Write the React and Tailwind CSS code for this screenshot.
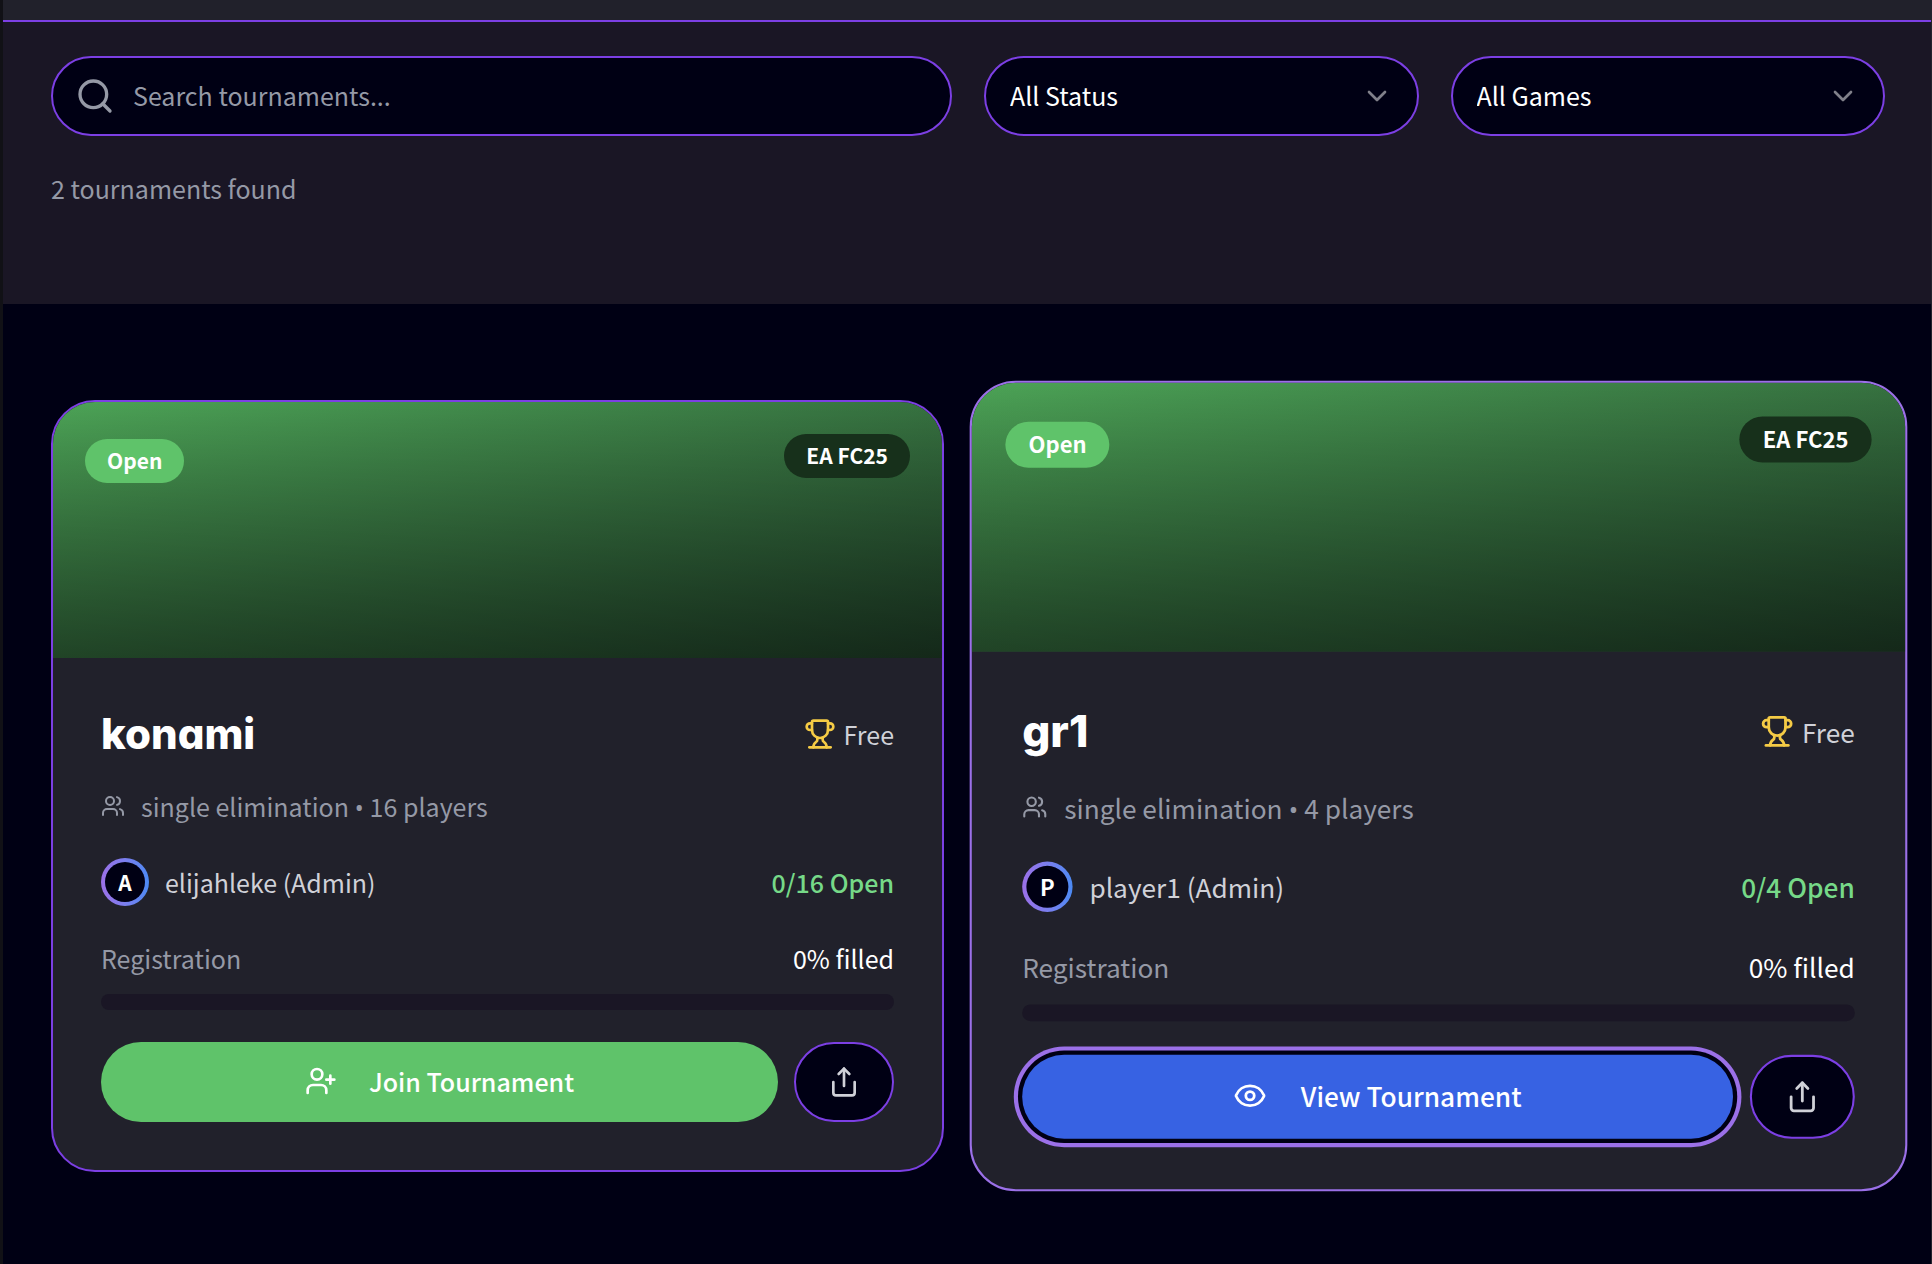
import React from 'react';
import { ChevronDown, Eye, Search, Share, Trophy, UserPlus, Users } from 'lucide-react';

const tournaments = [
    { id: 1, name: 'konami', game: 'EA FC25', format: 'single elimination', size: 16, joined: 0, host: 'elijahleke', initial: 'A', action: 'join' },
    { id: 2, name: 'gr1', game: 'EA FC25', format: 'single elimination', size: 4, joined: 0, host: 'player1', initial: 'P', action: 'view', active: true },
];

const FilterSelect = ({ label, options }) => (
    <div className="relative">
        <select aria-label={label} className="h-20 w-full appearance-none rounded-full border-2 border-[#7c3fe4] bg-[#000014] pl-6 pr-16 text-[25px] text-white">
            {options.map(o => <option key={o}>{o}</option>)}
        </select>
        <ChevronDown size={32} className="pointer-events-none absolute right-[26px] top-6 text-white/50" />
    </div>
);

const ActionButton = ({ action }) => action === 'join' ? (
    <button className="flex h-20 flex-1 items-center justify-center gap-8 rounded-full bg-[#5fc36a] pb-0.5 font-medium">
        <UserPlus size={32} />Join Tournament
    </button>
) : (
    <button className="flex h-20 flex-1 items-center justify-center gap-8 rounded-full bg-[#3762e3] pb-0.5 font-medium ring-4 ring-[#9b70e8] ring-offset-4 ring-offset-[#000014]">
        <Eye size={32} />View Tournament
    </button>
);

const TournamentCard = ({ t }) => {
    const filled = Math.round((t.joined / t.size) * 100);
    return (
        <article className={`overflow-hidden rounded-[44px] border-2 bg-[#21212b] text-white ${t.active ? 'scale-105 border-[#9b70e8]' : 'border-[#7c3fe4]'}`}>
            <div className="relative h-64 bg-linear-to-br from-[#4ca356] to-[#21432a]">
                <div className="h-full bg-linear-to-t from-black/40 to-transparent"></div>
                <span className="absolute left-8 top-[37px] flex h-11 items-center rounded-full bg-[#5fc36a] px-[22px] text-[21px] font-bold">Open</span>
                <span className="absolute right-8 top-8 flex h-11 items-center rounded-full bg-[#17301b] px-[22px] text-[21px] font-bold">{t.game}</span>
            </div>
            <div className="p-12 text-[25px] leading-10">
                <div className="mb-6 flex items-center justify-between">
                    <h3 className="font-[Inter,sans-serif] text-[42px] font-extrabold leading-14 [font-feature-settings:'cv11']">{t.name}</h3>
                    <div className="flex items-center gap-2 text-[#d0d1d8]"><Trophy size={32} className="text-[#f5cb45]" />Free</div>
                </div>
                <div className="mb-8 flex items-center gap-4 text-[#9599a6]">
                    <Users size={24} />
                    <p>{t.format} <span className="font-['Open_Sans',sans-serif] leading-none">•</span> {t.size} players</p>
                </div>
                <div className="mb-8 flex h-12 items-center justify-between">
                    <div className="flex items-center gap-4 text-[#d0d1d8]">
                        <div className="size-12 rounded-full bg-linear-to-r from-[#9b70e8] to-[#4a8af4] p-1">
                            <div className="flex size-full items-center justify-center rounded-full bg-[#000014] text-[21px] font-bold text-white">{t.initial}</div>
                        </div>
                        {t.host} (Admin)
                    </div>
                    <span className="font-medium text-[#76d988]">{t.joined}/{t.size} Open</span>
                </div>
                <div className="mb-4 flex justify-between"><span className="text-[#9599a6]">Registration</span><span>{filled}% filled</span></div>
                <div className="mb-8 h-4 overflow-hidden rounded-full bg-[#1a1625]"><div className="h-full bg-[#5fc36a]" style={{ width: `${filled}%` }}></div></div>
                <div className="flex gap-4">
                    <ActionButton action={t.action} />
                    <button aria-label="Share" className="flex h-20 w-[100px] items-center justify-center rounded-full border-2 border-[#7c3fe4] bg-[#000014] text-[#d0d1d8]"><Share size={32} /></button>
                </div>
            </div>
        </article>
    );
};

export default function App() {
    return (
        <div className="min-h-screen border-l-[3px] border-r border-l-[#111116] border-r-[#24242e] bg-[#000014] font-['Noto_Sans_CJK_SC',sans-serif]">
            <header className="h-[22px] border-b-2 border-[#7c3fe4] bg-[#21212b]"></header>
            <section className="bg-[#1a1625] pb-24 pl-12 pr-[46px] pt-[34px]">
                <div className="grid grid-cols-4 gap-8">
                    <div className="relative col-span-2">
                        <Search size={40} className="absolute left-6 top-5 text-[#9599a6]" />
                        <input type="text" aria-label="Search tournaments" placeholder="Search tournaments..." className="h-20 w-full rounded-full border-2 border-[#7c3fe4] bg-[#000014] pb-0.5 pl-20 pr-6 text-[25px] text-white placeholder:text-[#9599a6]" />
                    </div>
                    <FilterSelect label="Status" options={['All Status', 'Open', 'In Progress', 'Completed']} />
                    <FilterSelect label="Game" options={['All Games', 'EA FC25']} />
                </div>
                <p className="mt-8 text-[25px] leading-10 text-[#9599a6]">{tournaments.length} tournaments found</p>
            </section>
            <main className="grid grid-cols-2 gap-12 pb-[92px] pl-12 pr-[46px] pt-24">
                {tournaments.map(t => <TournamentCard key={t.id} t={t} />)}
            </main>
        </div>
    );
}
